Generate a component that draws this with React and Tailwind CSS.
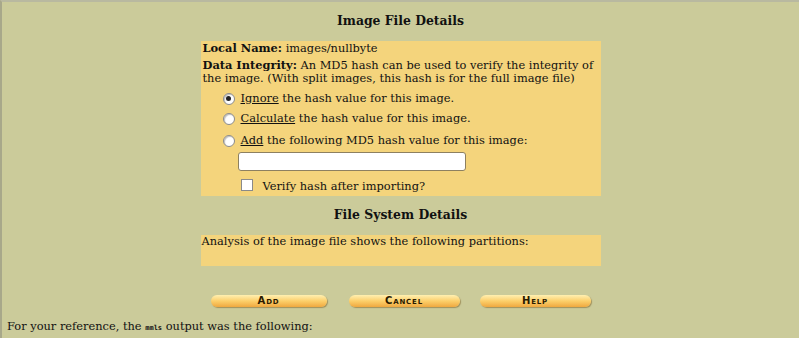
const serif = { fontFamily: '"DejaVu Serif", serif' };

function Radio({ checked }) {
  return (
    <span className="relative inline-flex h-[12px] w-[12px] shrink-0 items-center justify-center rounded-full border border-[#8a8a8a] bg-white shadow-[inset_1px_1px_1px_rgba(0,0,0,0.25)]">
      {checked && <span className="h-[5px] w-[5px] rounded-full bg-[#222]" />}
    </span>
  );
}

function PillButton({ label, w }) {
  return (
    <div
      className={`flex h-[12px] items-center justify-center rounded-full bg-gradient-to-b from-[#fff0b0] via-[#fccf6a] to-[#efa83e] shadow-[1px_1px_1px_rgba(120,90,30,0.5)] ${w}`}
    >
      <span
        className="text-[10px] font-bold leading-none tracking-[0.8px] text-[#2a1a00]"
        style={{ fontFamily: '"DejaVu Sans", sans-serif', fontVariant: "small-caps" }}
      >
        {label}
      </span>
    </div>
  );
}

export default function App() {
  return (
    <div
      className="h-[338px] w-[799px] overflow-hidden border-t-2 border-l-2 border-t-[#b9b9a0] border-l-[#a8a88a] bg-[#cbcb9a] text-[11.4px] text-[#111]"
      style={serif}
    >
      <div className="flex flex-col items-center">
        <h1 className="mt-[11px] text-[12.4px] font-bold leading-[16px]">Image File Details</h1>

        <div className="mt-[12px] w-[400px] bg-[#f4d47c] px-[2px] pb-[3px] leading-[13px]">
          <div className="pt-[1px]">
            <b>Local Name:</b> images/nullbyte
          </div>
          <div className="mt-[4px]">
            <b>Data Integrity:</b> An MD5 hash can be used to verify the integrity of the image. (With split images, this hash is for the full image file)
          </div>

          <div className="mt-[7px] flex flex-col pl-[20px]">
            <div className="flex items-center gap-[6px]">
              <Radio checked />
              <span>
                <u>Ignore</u> the hash value for this image.
              </span>
            </div>
            <div className="mt-[7px] flex items-center gap-[6px]">
              <Radio />
              <span>
                <u>Calculate</u> the hash value for this image.
              </span>
            </div>
            <div className="mt-[9px] flex items-center gap-[6px]">
              <Radio />
              <span>
                <u>Add</u> the following MD5 hash value for this image:
              </span>
            </div>
          </div>
          <div className="mt-[5px] pl-[35px]">
            <div className="h-[19px] w-[228px] rounded-[3px] border border-[#8d8060] bg-white" />
          </div>
          <div className="mt-[6px] flex items-center pl-[38px]">
            <span className="h-[12px] w-[12px] border border-[#8a8a8a] bg-white" />
            <span className="ml-[10px] mt-[3px]">Verify hash after importing?</span>
          </div>
        </div>

        <h2 className="mt-[11px] text-[12.4px] font-bold leading-[16px]">File System Details</h2>

        <div className="mt-[12px] h-[31px] w-[400px] bg-[#f4d47c] px-[1px] leading-[13px]">
          Analysis of the image file shows the following partitions:
        </div>

        <div className="mt-[29px] flex w-[400px] items-center pl-[10px]">
          <PillButton label="Add" w="w-[116px]" />
          <div className="ml-[22px]">
            <PillButton label="Cancel" w="w-[111px]" />
          </div>
          <div className="ml-[20px]">
            <PillButton label="Help" w="w-[111px]" />
          </div>
        </div>
      </div>

      <div className="mt-[13px] pl-[5px] leading-[13px]">
        For your reference, the{" "}
        <span className="text-[7px] font-bold" style={{ fontFamily: '"DejaVu Sans Mono", monospace' }}>
          mmls
        </span>{" "}
        output was the following:
      </div>
    </div>
  );
}
